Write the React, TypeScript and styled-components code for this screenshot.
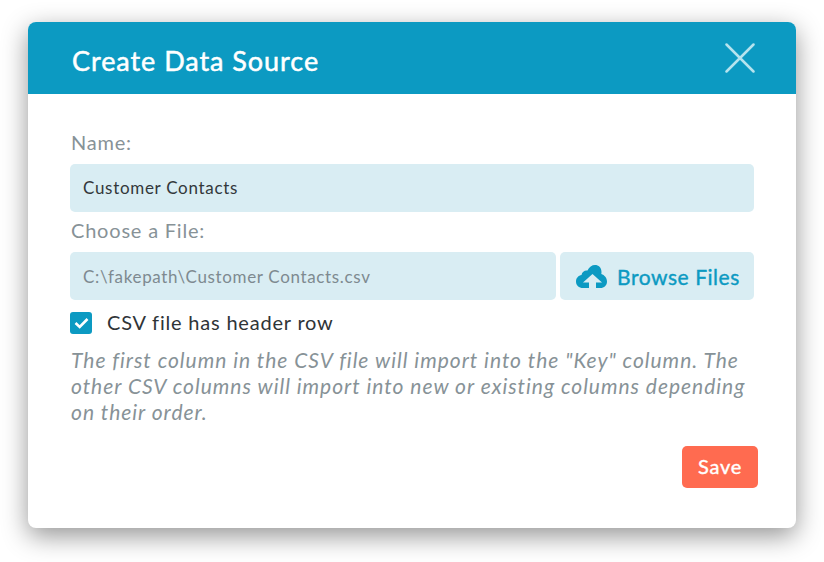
import * as React from 'react';
import styled, {createGlobalStyle} from 'styled-components';

const GlobalStyle = createGlobalStyle`
    html, body {
        margin: 0;
        background: #fff;
    }
    body {
        font-family: Lato, "Open Sans", sans-serif;
    }
`;

const Page = styled.div`
    width: 824px;
    height: 562px;
    padding: 22px 28px 0;
    box-sizing: border-box;
    overflow: hidden;
`;

const Modal = styled.div`
    width: 768px;
    height: 506px;
    background: #fff;
    border-radius: 8px;
    overflow: hidden;
    box-shadow: 0 8px 26px rgba(0, 0, 0, 0.42);
`;

const Header = styled.div`
    height: 72px;
    background: #0c9ac2;
    display: flex;
    align-items: center;
    justify-content: space-between;
    padding: 0 41px 0 44px;
`;

const Title = styled.h1`
    margin: 0;
    padding-top: 4px;
    color: #fff;
    font-size: 27px;
    font-weight: 400;
    letter-spacing: 0.95px;
    -webkit-text-stroke: 0.5px #fff;
`;

const CloseButton = styled.button`
    border: 0;
    padding: 0;
    background: none;
    width: 30px;
    height: 30px;
    display: block;
`;

const Body = styled.div`
    padding: 35px 42px 0;
    display: flex;
    flex-direction: column;
`;

const Label = styled.label`
    display: block;
    height: 35px;
    line-height: 26px;
    margin-top: ${p => p.$first ? '0' : '5px'};
    padding-left: 1px;
    font-size: 20px;
    letter-spacing: 0.8px;
    color: #879297;
`;

const inputBox = `
    height: 48px;
    box-sizing: border-box;
    background: #d9edf3;
    border-radius: 5px;
    display: flex;
    align-items: center;
`;

const TextField = styled.div`
    ${inputBox}
    padding: 0 13px 1px;
    font-size: 17px;
    letter-spacing: 0.7px;
    color: #33383b;
`;

const FileRow = styled.div`
    display: flex;
    gap: 4px;
`;

const FilePath = styled.div`
    ${inputBox}
    flex: 1;
    padding: 0 13px;
    font-size: 17px;
    letter-spacing: 0.65px;
    color: #7e8a90;
`;

const BrowseButton = styled.div`
    ${inputBox}
    width: 194px;
    padding-left: 16px;
    gap: 10px;
    font-size: 21px;
    font-weight: 400;
    letter-spacing: 0.55px;
    -webkit-text-stroke: 0.4px #0c9ac2;
    color: #0c9ac2;
`;

const CheckRow = styled.div`
    display: flex;
    align-items: center;
    gap: 15px;
    margin-top: 12px;
    height: 22px;
    font-size: 20px;
    letter-spacing: 0.8px;
    color: #2f3437;
`;

const CheckLabel = styled.span`
    line-height: 20px;
    margin-top: -2px;
`;

const CheckBox = styled.span`
    width: 22px;
    height: 22px;
    background: #0c9ac2;
    border-radius: 3px;
    display: flex;
    align-items: center;
    justify-content: center;
`;

const Help = styled.p`
    margin: 13px 0 0;
    padding-left: 1px;
    font-size: 21px;
    line-height: 26px;
    font-style: italic;
    letter-spacing: 0.98px;
    color: #879297;
`;

const Footer = styled.div`
    display: flex;
    justify-content: flex-end;
    margin: 21px -4px 0 0;
`;

const SaveButton = styled.button`
    width: 76px;
    height: 42px;
    border: 0;
    border-radius: 5px;
    background: #ff6b50;
    color: #fff;
    font-family: inherit;
    font-size: 20px;
    font-weight: 400;
    letter-spacing: 0.8px;
    -webkit-text-stroke: 0.4px #fff;
    padding: 0 0 3px;
`;

const CloudIcon: React.FC = () => (
    <svg width="31" height="23" viewBox="0 0 31 23">
        <path
            fill="#0c9ac2"
            d="M13 23H7C3 23 0 20.500 0 16.500C0 13 2.500 10.500 5.500 10C6 6.500 9 5 11.500 5.500C13 2 16 0 19 0C22.500 0 25.500 2.500 25.500 7C25.500 7.800 25.400 8.500 25.300 9C28.500 10 31 13 31 16.500C31 20.500 28 23 24.500 23H20V17.500H26L16.500 9L7 17.500H13Z"
        />
    </svg>
);

const App: React.FC = () => {
    return (
        <Page>
            <GlobalStyle />
            <Modal>
                <Header>
                    <Title>Create Data Source</Title>
                    <CloseButton aria-label="Close">
                        <svg width="30" height="30" viewBox="0 0 30 30">
                            <path d="M1.500 1.500L28.500 28.500M28.500 1.500L1.500 28.500" stroke="#b5e3ee" strokeWidth="2.500" strokeLinecap="round" />
                        </svg>
                    </CloseButton>
                </Header>
                <Body>
                    <Label $first>Name:</Label>
                    <TextField>Customer Contacts</TextField>
                    <Label>Choose a File:</Label>
                    <FileRow>
                        <FilePath>C:\fakepath\Customer Contacts.csv</FilePath>
                        <BrowseButton>
                            <CloudIcon />
                            Browse Files
                        </BrowseButton>
                    </FileRow>
                    <CheckRow>
                        <CheckBox>
                            <svg width="15" height="12" viewBox="0 0 15 12">
                                <path d="M1.500 6L5.700 10L13.500 2" fill="none" stroke="#fff" strokeWidth="2.600" />
                            </svg>
                        </CheckBox>
                        <CheckLabel>CSV file has header row</CheckLabel>
                    </CheckRow>
                    <Help>
                        The first column in the CSV file will import into the "Key" column. The
                        other CSV columns will import into new or existing columns depending
                        on their order.
                    </Help>
                    <Footer>
                        <SaveButton>Save</SaveButton>
                    </Footer>
                </Body>
            </Modal>
        </Page>
    );
};

export default App;
